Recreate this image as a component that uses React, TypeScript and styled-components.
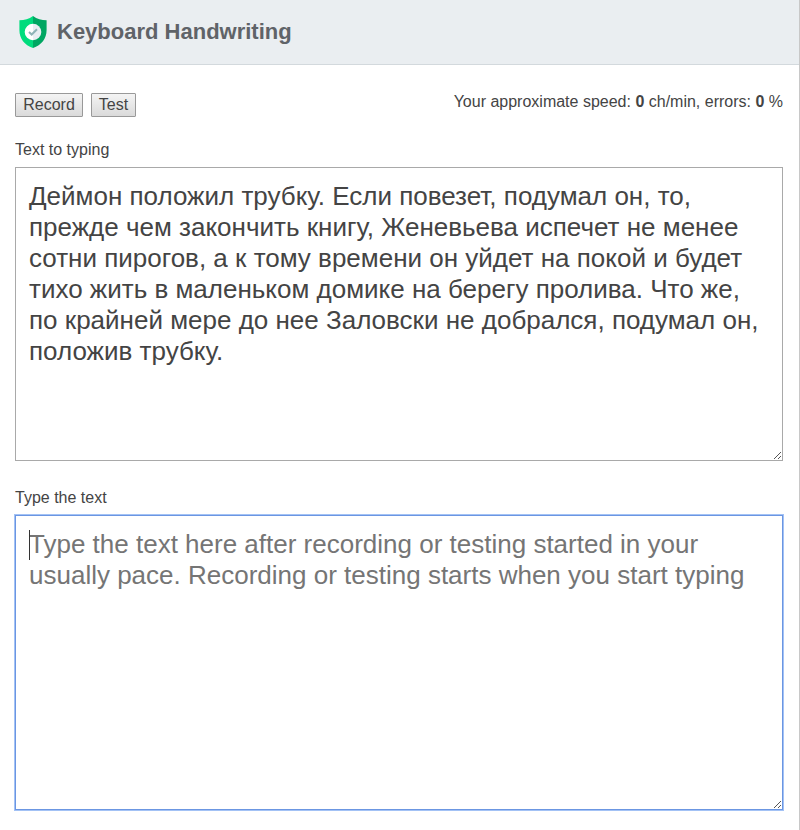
import React from "react";
import styled, { createGlobalStyle, css } from "styled-components";

const GlobalStyle = createGlobalStyle`
  *, *::before, *::after { box-sizing: border-box; }
  body {
    margin: 0;
    background: #fff;
    color: #444;
    font-family: "Liberation Sans", Arial, sans-serif;
    font-size: 16px;
    line-height: 18px;
  }
`;

const Page = styled.div`
  height: 830px;
  overflow: hidden;
  border-right: 1px solid #c8c8c8;
`;

const Header = styled.header`
  display: flex;
  align-items: center;
  gap: 10px;
  height: 65px;
  padding: 0 19px 1px;
  background: #eaeef1;
  border-bottom: 1px solid #d3d9dd;
`;

const Title = styled.h1`
  margin: 0;
  font-size: 22px;
  line-height: 26px;
  font-weight: bold;
  color: #5f6368;
`;

const Main = styled.main`
  padding: 28px 16px 0 15px;
`;

const Toolbar = styled.div`
  display: flex;
  justify-content: space-between;
  align-items: flex-start;
  height: 48px;
`;

const ButtonGroup = styled.div`
  display: flex;
  gap: 8px;
`;

const ActionButton = styled.button<{ $width: number }>`
  width: ${({ $width }) => $width}px;
  height: 24px;
  padding: 0 0 1px;
  border: 1px solid #999;
  border-radius: 1px;
  background: linear-gradient(#f4f4f4, #dadada);
  color: #444;
  font: inherit;
  line-height: 20px;
  text-align: center;
`;

const Stats = styled.div`
  white-space: nowrap;
`;

const Field = styled.section`
  margin-bottom: 28px;
`;

const Label = styled.label`
  display: block;
  height: 26px;
`;

const AreaFrame = styled.div<{ $height: number }>`
  position: relative;
  height: ${({ $height }) => $height}px;
`;

const TextArea = styled.textarea<{ $active?: boolean }>`
  display: block;
  width: 100%;
  height: 100%;
  padding: 13px;
  border: 1px solid #a9a9a9;
  border-radius: 0;
  outline: none;
  resize: none;
  overflow: hidden;
  background: #fff;
  color: #444;
  font: 26px/31px "Liberation Sans", Arial, sans-serif;
  &::placeholder { color: #757575; opacity: 1; }
  ${({ $active }) => $active && css`
    border-color: #6b96e2;
    box-shadow: 0 0 0 1px #a3c2f5;
  `}
`;

const Grip = styled.svg`
  position: absolute;
  right: 2px;
  bottom: 2px;
  pointer-events: none;
`;

const Caret = styled.span`
  position: absolute;
  left: 14px;
  top: 15px;
  width: 1px;
  height: 30px;
  background: #333;
`;

const ResizeGrip = () => (
  <Grip width="7" height="7" viewBox="0 0 7 7" fill="#555" shapeRendering="crispEdges">
    {[0, 1, 2, 3, 4, 5, 6].map((i) => (
      <rect key={i} x={i} y={6 - i} width="1" height="1" />
    ))}
    {[4, 5, 6].map((i) => (
      <rect key={i} x={i} y={10 - i} width="1" height="1" />
    ))}
  </Grip>
);

const Shield = () => (
  <svg width="28" height="32" viewBox="0 0 28 32" aria-hidden="true">
    <path d="M14 0C10 3 5.500 4.300 0.400 4.300V14C0.400 22.700 5.500 29 14 32Z" fill="#00dc7d" />
    <path d="M14 0C18 3 22.500 4.300 27.600 4.300V14C27.600 22.700 22.500 29 14 32Z" fill="#00a662" />
    <path d="M14 7.700A8.300 8.300 0 0 0 14 24.300Z" fill="#fff" />
    <path d="M14 7.700A8.300 8.300 0 0 1 14 24.300Z" fill="#e9edf2" />
    <path d="M10 16L12.700 18.500L18 13.300" fill="none" stroke="#8fb3b7" strokeWidth="2" />
  </svg>
);

export default function App() {
  return (
    <>
      <GlobalStyle />
      <Page>
        <Header>
          <Shield />
          <Title>Keyboard Handwriting</Title>
        </Header>
        <Main>
          <Toolbar>
            <ButtonGroup>
              <ActionButton $width={68}>Record</ActionButton>
              <ActionButton $width={45}>Test</ActionButton>
            </ButtonGroup>
            <Stats>
              Your approximate speed: <b>0</b> ch/min, errors: <b>0</b> %
            </Stats>
          </Toolbar>
          <Field>
            <Label htmlFor="sample">Text to typing</Label>
            <AreaFrame $height={294}>
              <TextArea
                id="sample"
                readOnly
                spellCheck={false}
                value="Деймон положил трубку. Если повезет, подумал он, то, прежде чем закончить книгу, Женевьева испечет не менее сотни пирогов, а к тому времени он уйдет на покой и будет тихо жить в маленьком домике на берегу пролива. Что же, по крайней мере до нее Заловски не добрался, подумал он, положив трубку."
              />
              <ResizeGrip />
            </AreaFrame>
          </Field>
          <Field>
            <Label htmlFor="typed">Type the text</Label>
            <AreaFrame $height={295}>
              <TextArea
                id="typed"
                $active
                spellCheck={false}
                placeholder="Type the text here after recording or testing started in your usually pace. Recording or testing starts when you start typing"
              />
              <Caret />
              <ResizeGrip />
            </AreaFrame>
          </Field>
        </Main>
      </Page>
    </>
  );
}
